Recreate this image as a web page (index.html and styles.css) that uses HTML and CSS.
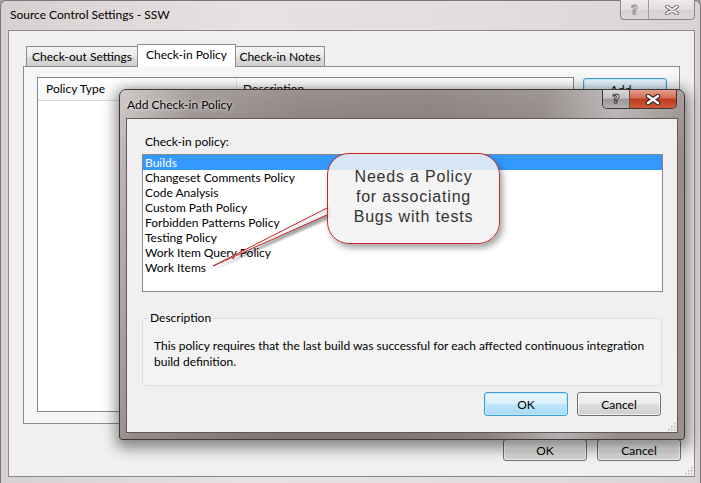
FILE: index.html
```html
<!DOCTYPE html>
<html>
<head>
<meta charset="utf-8">
<link rel="stylesheet" href="styles.css">
</head>
<body>
<div class="win">
  <div class="titlebar">
    <span class="title">Source Control Settings - SSW</span>
    <div class="caps outer-caps">
      <span class="cap cap-help">?</span>
      <span class="cap cap-close">
        <svg width="14" height="10" viewBox="0 0 14 10"><path d="M2 1.5 L12 8.5 M12 1.5 L2 8.5" stroke="#7a7a7a" stroke-width="4" stroke-linecap="round"/><path d="M2 1.5 L12 8.5 M12 1.5 L2 8.5" stroke="#f4f4f4" stroke-width="2" stroke-linecap="round"/></svg>
      </span>
    </div>
  </div>
  <div class="client">
    <div class="tabs">
      <div class="tab t1">Check-out Settings</div>
      <div class="tab t2 active">Check-in Policy</div>
      <div class="tab t3">Check-in Notes</div>
    </div>
    <div class="panel">
      <div class="listview">
        <div class="lv-header">
          <div class="col c1">Policy Type</div>
          <div class="col c2">Description</div>
        </div>
      </div>
      <div class="side">
        <button class="btn default add">Add...</button>
      </div>
    </div>
    <div class="footer">
      <button class="btn">OK</button>
      <button class="btn">Cancel</button>
    </div>
    <svg class="grip" width="10" height="10" viewBox="0 0 10 10"><g fill="#b8b8b8"><rect x="8" y="2" width="1.5" height="1.5"/><rect x="5" y="5" width="1.5" height="1.5"/><rect x="8" y="5" width="1.5" height="1.5"/><rect x="2" y="8" width="1.5" height="1.5"/><rect x="5" y="8" width="1.5" height="1.5"/><rect x="8" y="8" width="1.5" height="1.5"/></g></svg>
  </div>

  <div class="dialog">
    <div class="dlg-title">
      <span class="dlg-title-text">Add Check-in Policy</span>
      <div class="caps inner-caps">
        <span class="cap icap-help">?</span>
        <span class="cap icap-close">
          <svg width="16" height="11" viewBox="0 0 16 11"><path d="M3 2 L13 9 M13 2 L3 9" stroke="#3a2a28" stroke-width="4.6" stroke-linecap="round"/><path d="M3 2 L13 9 M13 2 L3 9" stroke="#ffffff" stroke-width="2.4" stroke-linecap="round"/></svg>
        </span>
      </div>
    </div>
    <div class="dlg-client">
      <div class="lbl">Check-in policy:</div>
      <div class="listbox">
        <div class="item sel">Builds</div>
        <div class="item">Changeset Comments Policy</div>
        <div class="item">Code Analysis</div>
        <div class="item">Custom Path Policy</div>
        <div class="item">Forbidden Patterns Policy</div>
        <div class="item">Testing Policy</div>
        <div class="item">Work Item Query Policy</div>
        <div class="item">Work Items</div>
      </div>
      <fieldset class="group">
        <legend>Description</legend>
        <p class="desc">This policy requires that the last build was successful for each affected continuous integration build definition.</p>
      </fieldset>
      <div class="dlg-buttons">
        <button class="btn big default">OK</button>
        <button class="btn big">Cancel</button>
      </div>
      <svg class="grip" width="10" height="10" viewBox="0 0 10 10"><g fill="#b8b8b8"><rect x="8" y="2" width="1.5" height="1.5"/><rect x="5" y="5" width="1.5" height="1.5"/><rect x="8" y="5" width="1.5" height="1.5"/><rect x="2" y="8" width="1.5" height="1.5"/><rect x="5" y="8" width="1.5" height="1.5"/><rect x="8" y="8" width="1.5" height="1.5"/></g></svg>
    </div>
  </div>

  <svg class="pointer" width="140" height="90" viewBox="0 0 140 90">
    <defs><filter id="blur" x="-20%" y="-20%" width="140%" height="140%"><feGaussianBlur stdDeviation="1.2"/></filter></defs>
    <polygon points="15,79 131,20 131,28" fill="rgba(0,0,0,0.35)" filter="url(#blur)"/>
    <polygon points="13,76 129,17 129,24" fill="#f3f3f3" stroke="#c3272d" stroke-width="1"/>
  </svg>
  <div class="callout">Needs a Policy<br>for associating<br>Bugs with tests</div>
</div>
</body>
</html>
```

FILE: styles.css
```css
html, body {
  margin: 0;
  padding: 0;
}
body {
  width: 701px;
  height: 483px;
  overflow: hidden;
  background: #a7a3ad;
  font-family: Lato, "Open Sans", sans-serif;
  font-size: 12px;
  color: #000;
}

.win {
  position: relative;
  box-sizing: border-box;
  width: 701px;
  height: 483px;
  border: 1px solid #7d7777;
  border-bottom: none;
  border-radius: 6px 6px 0 0;
  background: linear-gradient(to right, #d7d0d0 0%, #e7e2e2 35%, #e3dddd 70%, #dad3d3 100%);
  display: flex;
  flex-direction: column;
  padding: 0 5px 6px 7px;
}

.titlebar {
  height: 29px;
  display: flex;
  align-items: flex-start;
  flex-shrink: 0;
}
.title {
  padding: 6px 0 0 2px;
  line-height: 16px;
  font-size: 12px;
}

.caps {
  margin-left: auto;
  display: flex;
}
.cap {
  display: flex;
  align-items: center;
  justify-content: center;
  box-sizing: border-box;
}
.outer-caps {
  margin-top: -1px;
  height: 19px;
  border: 1px solid #8b8686;
  border-top: none;
  border-radius: 0 0 4px 4px;
  overflow: hidden;
  background: linear-gradient(#eeeaea, #e2dddd 50%, #d6d0d0 51%, #dcd7d7);
}
.cap-help {
  width: 28px;
  border-right: 1px solid #a09a9a;
  font-family: "DejaVu Sans", sans-serif;
  font-weight: bold;
  font-size: 12px;
  color: #f6f6f6;
  -webkit-text-stroke: 0.8px #7a7a7a;
}
.cap-close {
  width: 45px;
}

.client {
  flex: 1;
  position: relative;
  background: #f0f0f0;
  border: 1px solid #8a8a8a;
  display: flex;
  flex-direction: column;
  padding: 13px 14px 15px 14px;
}

.tabs {
  display: flex;
  align-items: flex-end;
  height: 22px;
  padding-left: 3px;
  flex-shrink: 0;
}
.tab {
  box-sizing: border-box;
  height: 20px;
  border: 1px solid #898c95;
  border-bottom: none;
  text-align: center;
  line-height: 20px;
  background: linear-gradient(#f3f3f3 0%, #ebebeb 50%, #dddddd 51%, #cfcfcf 100%);
  white-space: nowrap;
}
.t1 { width: 112px; }
.t2 { width: 99px; margin-left: -1px; }
.t3 { width: 90px; margin-left: -1px; }
.tab.active {
  height: 23px;
  line-height: 20px;
  background: #fff;
  margin-bottom: -1px;
  position: relative;
  z-index: 1;
}

.panel {
  flex: 1;
  border: 1px solid #898c95;
  background: #f6f6f6;
  display: flex;
  gap: 9px;
  padding: 10px 12px 11px 13px;
}
.listview {
  flex: 1;
  background: #fff;
  border: 1px solid #828790;
}
.lv-header {
  display: flex;
  height: 22px;
  background: linear-gradient(#ffffff, #f6f7f8);
  border-bottom: 1px solid #d5d5d5;
}
.col {
  line-height: 22px;
}
.c1 {
  width: 199px;
  padding-left: 8px;
  box-sizing: border-box;
  border-right: 1px solid #e3e5e7;
}
.c2 {
  padding-left: 6px;
}
.side {
  width: 84px;
  padding-top: 1px;
}

.btn {
  width: 84px;
  height: 22px;
  box-sizing: border-box;
  border: 1px solid #707070;
  border-radius: 3px;
  background: linear-gradient(#f2f2f2 0%, #ebebeb 50%, #dddddd 51%, #cfcfcf 100%);
  font-family: inherit;
  font-size: 12px;
  color: #000;
  padding: 0;
  box-shadow: inset 0 0 0 1px rgba(255,255,255,0.7);
}
.btn.add {
  height: 23px;
}
.btn.default {
  border-color: #3c9fd9;
  background: linear-gradient(#eaf6fd 0%, #d9f0fc 50%, #bee6fd 51%, #a7d9f5 100%);
  box-shadow: inset 0 0 0 1px #c4e9fb;
}
.btn.big {
  height: 24px;
}

.footer {
  display: flex;
  justify-content: flex-end;
  gap: 10px;
  margin-top: 15px;
  margin-right: -1px;
  flex-shrink: 0;
}

.grip {
  position: absolute;
  right: 1px;
  bottom: 1px;
}

/* dialog */
.dialog {
  position: absolute;
  left: 118px;
  top: 88px;
  width: 566px;
  height: 351px;
  box-sizing: border-box;
  border: 1px solid #3f3636;
  border-radius: 7px 7px 3px 3px;
  background:
    linear-gradient(to bottom, rgba(255,255,255,0.18) 0px, rgba(255,255,255,0) 60px),
    linear-gradient(100deg, #c6c0bf 0%, #958b89 12%, #837876 30%, #7f7472 50%, #8a807e 68%, #b4afaf 80%, #968c8a 90%, #9a908e 100%);
  box-shadow: 1px 4px 14px 4px rgba(0,0,0,0.45);
  padding: 0 6px 6px 6px;
  display: flex;
  flex-direction: column;
  z-index: 2;
}
.dlg-title {
  height: 28px;
  display: flex;
  align-items: flex-start;
  flex-shrink: 0;
}
.dlg-title-text {
  align-self: center;
  padding-left: 1px;
  font-size: 12px;
  line-height: 16px;
  margin-top: 1px;
  text-shadow: 0 0 5px rgba(255,255,255,0.8), 0 0 2px rgba(255,255,255,0.6);
}
.inner-caps {
  height: 18px;
  margin-right: 1px;
  border: 1px solid #3e3434;
  border-top: none;
  border-radius: 0 0 5px 5px;
  overflow: hidden;
}
.icap-help {
  width: 27px;
  border-right: 1px solid #5a5050;
  background: linear-gradient(#d9d7d7 0%, #c4c0c0 45%, #9c9797 50%, #b4b0b0 100%);
  font-family: "DejaVu Sans", sans-serif;
  font-weight: bold;
  font-size: 13px;
  color: #fff;
  -webkit-text-stroke: 1px #3a3434;
  padding-bottom: 1px;
}
.icap-close {
  width: 46px;
  background: linear-gradient(#e4a08f 0%, #d36b52 45%, #bd3a1c 50%, #cf5a3c 100%);
}

.dlg-client {
  flex: 1;
  position: relative;
  background: #f0f0f0;
  border: 1px solid #625a5a;
  padding: 15px 14px 15px 15px;
  display: flex;
  flex-direction: column;
}
.lbl {
  line-height: 16px;
  padding-left: 3px;
}
.listbox {
  margin-top: 4px;
  height: 138px;
  box-sizing: border-box;
  border: 1px solid #828790;
  background: #fff;
}
.item {
  height: 15px;
  line-height: 15px;
  padding-left: 2px;
  white-space: nowrap;
}
.item.sel {
  background: #3399ff;
  color: #fff;
}
.group {
  margin: 18px 1px 0 0;
  padding: 12px 10px 15px 11px;
  border: 1px solid #d5dfe5;
  border-radius: 3px;
  background: #f3f3f3;
  min-width: 0;
}
.group legend {
  padding: 0 2px;
  margin-left: -6px;
  line-height: 16px;
}
.desc {
  margin: 0;
  line-height: 16px;
}
.dlg-buttons {
  display: flex;
  justify-content: flex-end;
  gap: 9px;
  margin-top: 6px;
  margin-right: 2px;
}

/* annotation */
.pointer {
  position: absolute;
  left: 199px;
  top: 189px;
  z-index: 3;
}
.callout {
  position: absolute;
  left: 326px;
  top: 152px;
  width: 173px;
  height: 91px;
  box-sizing: border-box;
  border: 1.5px solid #c3272d;
  border-radius: 22px;
  background: rgba(242,242,242,0.86);
  box-shadow: 3px 4px 6px rgba(0,0,0,0.35);
  z-index: 4;
  font-family: "Liberation Sans", Arial, sans-serif;
  font-size: 16px;
  letter-spacing: 0.8px;
  line-height: 20px;
  color: #333;
  text-align: center;
  padding-top: 13px;
}
```
